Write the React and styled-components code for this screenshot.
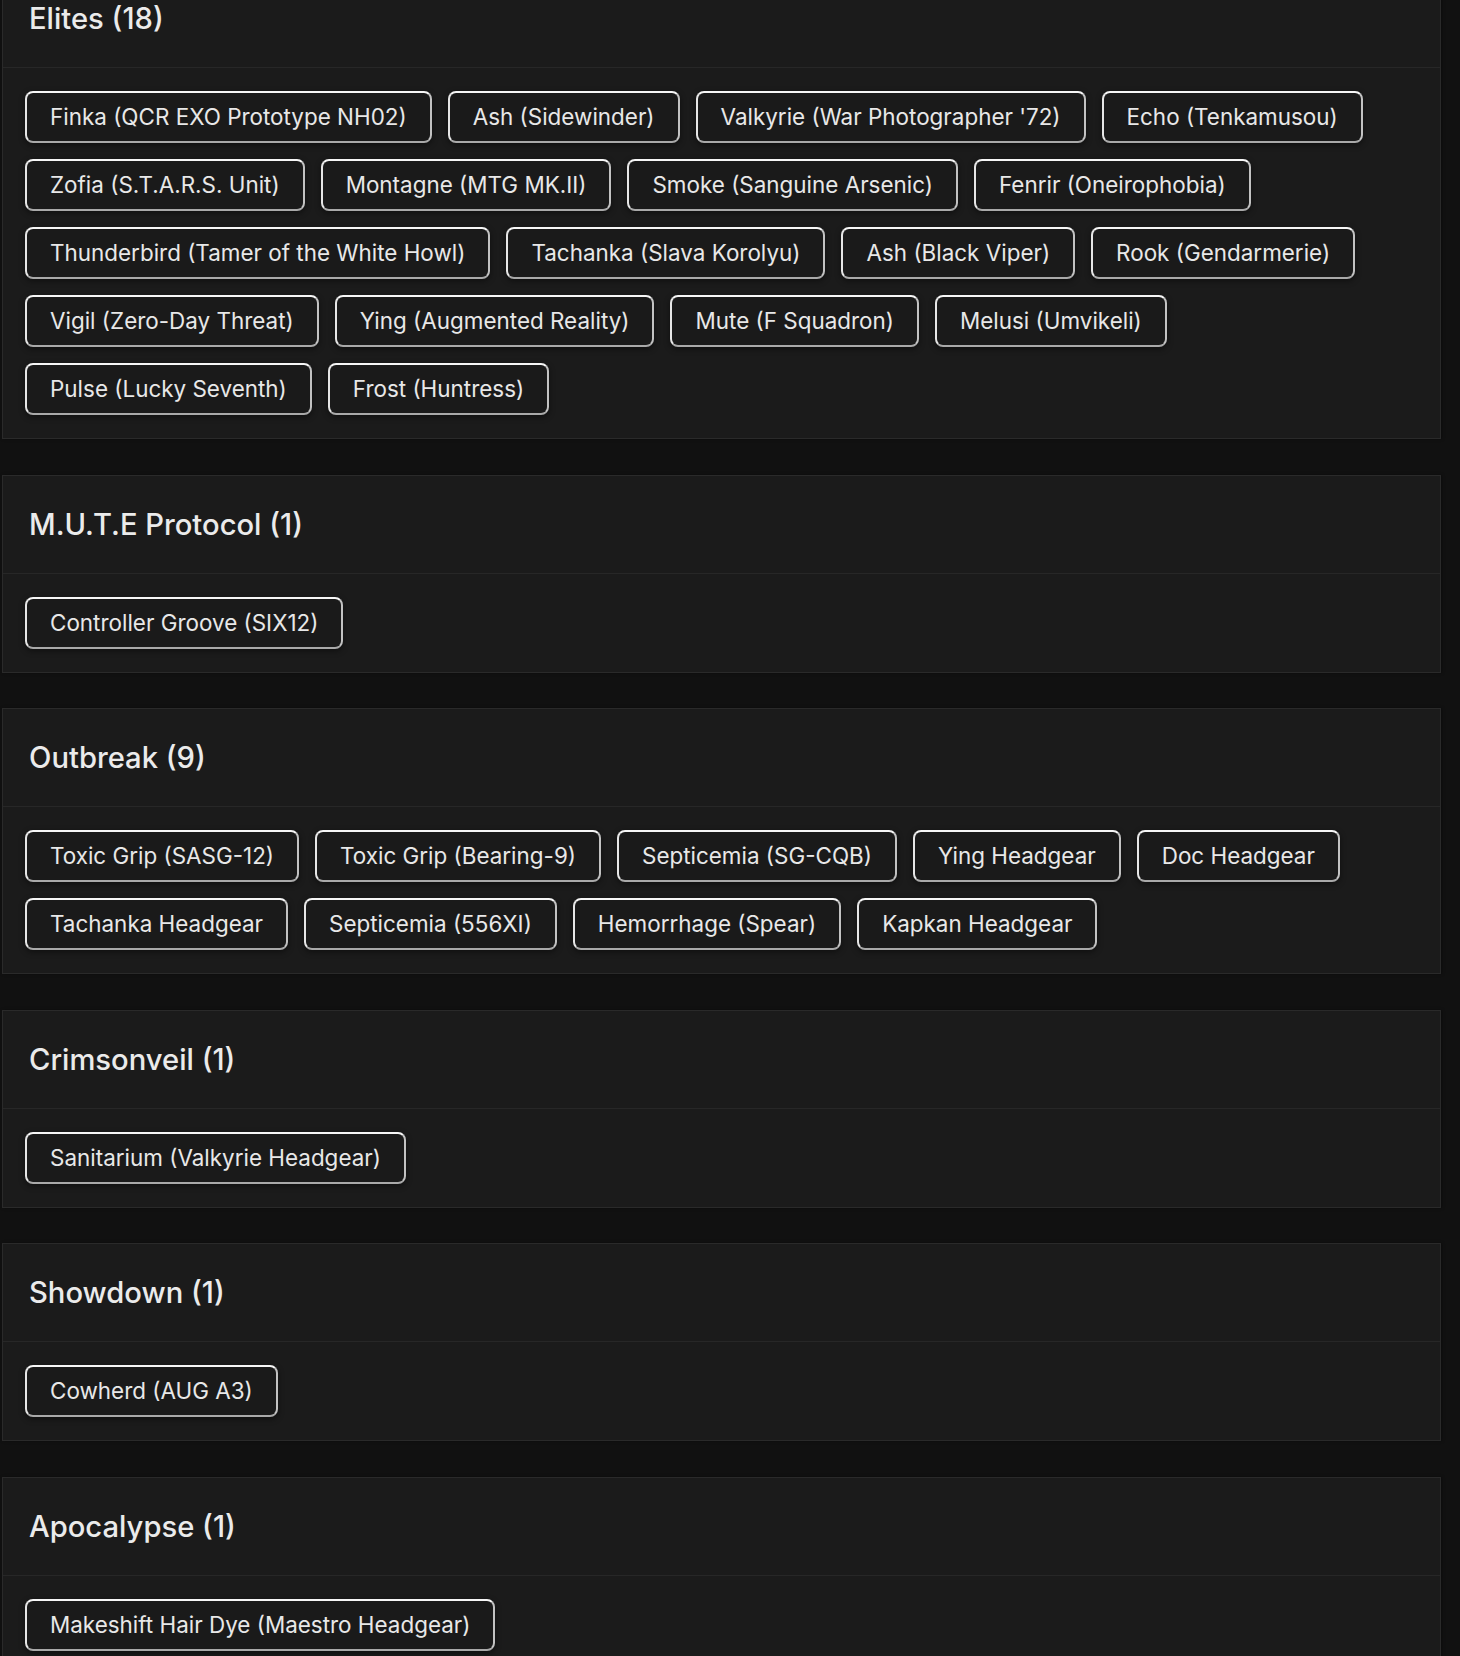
import React from 'react';
import styled, { createGlobalStyle } from 'styled-components';

const GlobalStyle = createGlobalStyle`
  html, body {
    margin: 0;
    padding: 0;
    background: #111111;
  }
  body {
    font-family: Inter, "Open Sans", sans-serif;
    color: #e8e8e8;
    overflow: hidden;
  }
`;

const collections = [
  {
    name: 'Elites',
    items: [
      'Finka (QCR EXO Prototype NH02)',
      'Ash (Sidewinder)',
      "Valkyrie (War Photographer '72)",
      'Echo (Tenkamusou)',
      'Zofia (S.T.A.R.S. Unit)',
      'Montagne (MTG MK.II)',
      'Smoke (Sanguine Arsenic)',
      'Fenrir (Oneirophobia)',
      'Thunderbird (Tamer of the White Howl)',
      'Tachanka (Slava Korolyu)',
      'Ash (Black Viper)',
      'Rook (Gendarmerie)',
      'Vigil (Zero-Day Threat)',
      'Ying (Augmented Reality)',
      'Mute (F Squadron)',
      'Melusi (Umvikeli)',
      'Pulse (Lucky Seventh)',
      'Frost (Huntress)',
    ],
  },
  { name: 'M.U.T.E Protocol', items: ['Controller Groove (SIX12)'] },
  {
    name: 'Outbreak',
    items: [
      'Toxic Grip (SASG-12)',
      'Toxic Grip (Bearing-9)',
      'Septicemia (SG-CQB)',
      'Ying Headgear',
      'Doc Headgear',
      'Tachanka Headgear',
      'Septicemia (556XI)',
      'Hemorrhage (Spear)',
      'Kapkan Headgear',
    ],
  },
  { name: 'Crimsonveil', items: ['Sanitarium (Valkyrie Headgear)'] },
  { name: 'Showdown', items: ['Cowherd (AUG A3)'] },
  { name: 'Apocalypse', items: ['Makeshift Hair Dye (Maestro Headgear)'] },
];

const Page = styled.main`
  /* page is scrolled a little: the first card's top is above the fold */
  margin-top: -31px;
  padding: 0 19px 40px 2px;
  display: flex;
  flex-direction: column;
  gap: 35.5px;
`;

const Card = styled.section`
  background: #1b1b1b;
  border: 1px solid #2a2a2a;
  box-shadow: 1px 0 3px rgba(0, 0, 0, 0.35);
`;

const CardHeader = styled.header`
  padding: 30px 26px;
  border-bottom: 1px solid #272727;
`;

const CardTitle = styled.h2`
  margin: 0;
  font-size: 29.2px;
  line-height: 37px;
  font-weight: 500;
  color: #ebebeb;
`;

const CardBody = styled.div`
  padding: 23px 22px;
  display: flex;
  flex-wrap: wrap;
  gap: 16px;
`;

const Chip = styled.button`
  font-family: Inter, "Open Sans", sans-serif;
  font-size: 22.45px;
  line-height: 28px;
  font-weight: 400;
  color: #e8e8e8;
  background: #1a1a1a;
  padding: 10px 23px;
  border: 2px solid;
  border-color: #f6f6f6 #c2c2c2 #a9a9a9 #e6e6e6;
  border-radius: 8px;
  box-shadow: 0 2px 6px rgba(0, 0, 0, 0.45);
  white-space: nowrap;
  cursor: pointer;
`;

const Collection = ({ name, items }) => (
  <Card>
    <CardHeader>
      <CardTitle>
        {name} ({items.length})
      </CardTitle>
    </CardHeader>
    <CardBody>
      {items.map((item) => (
        <Chip key={item} type="button">
          {item}
        </Chip>
      ))}
    </CardBody>
  </Card>
);

export default function App() {
  return (
    <>
      <GlobalStyle />
      <Page>
        {collections.map((c) => (
          <Collection key={c.name} {...c} />
        ))}
      </Page>
    </>
  );
}
